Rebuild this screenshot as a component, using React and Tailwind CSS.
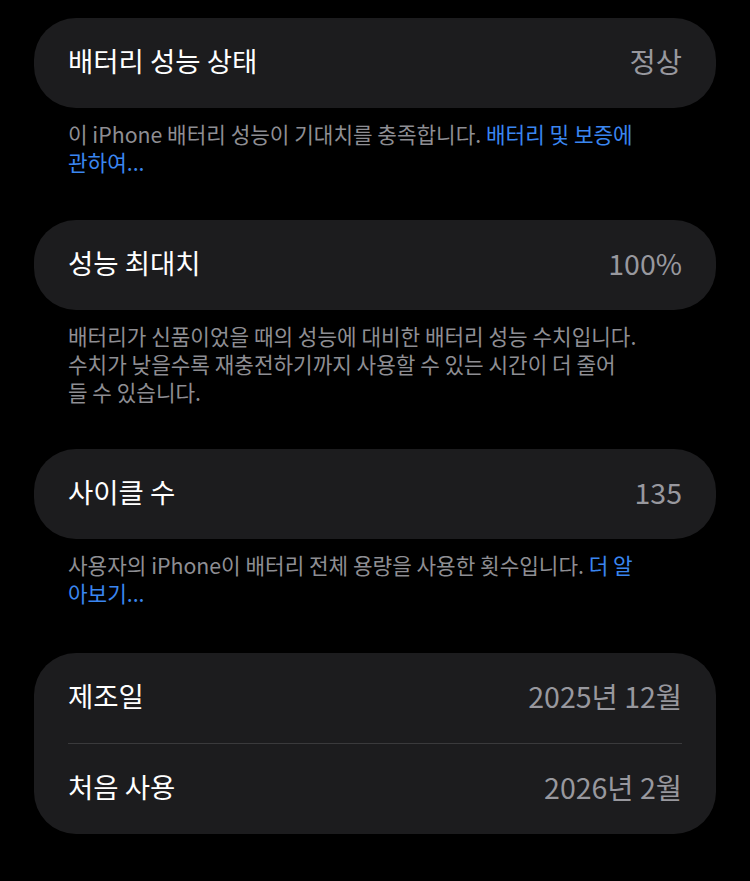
const FONT = { fontFamily: '"Noto Sans CJK KR", "Noto Sans", sans-serif' }

function Row({ label, value }) {
  return (
    <div className="flex h-[90px] items-center justify-between pr-[34px] pl-[34px] pb-[4px]">
      <span className="text-[27.5px] text-white">{label}</span>
      <span className="text-[28.5px] text-[#98989e]">{value}</span>
    </div>
  )
}

function Card({ children }) {
  return <div className="rounded-[42px] bg-[#1c1c1e]">{children}</div>
}

function Footer({ lines, className = '' }) {
  return (
    <div className={`whitespace-nowrap px-[34px] pt-[12px] text-[21.3px] leading-[28px] text-[#8e8e93] ${className}`}>
      {lines.map((l, i) => <div key={i}>{l}</div>)}
    </div>
  )
}

const Link = ({ children }) => <span className="text-[#3a86f0]">{children}</span>

export default function App() {
  return (
    <div style={FONT} className="min-h-[881px] bg-black px-[34px] pt-[18px]">
      <Card>
        <Row label="배터리 성능 상태" value="정상" />
      </Card>
      <Footer
        className="mb-[44px]"
        lines={[
          <>이 iPhone 배터리 성능이 기대치를 충족합니다. <Link>배터리 및 보증에</Link></>,
          <Link>관하여...</Link>,
        ]}
      />

      <Card>
        <Row label="성능 최대치" value="100%" />
      </Card>
      <Footer
        className="mb-[43px]"
        lines={[
          '배터리가 신품이었을 때의 성능에 대비한 배터리 성능 수치입니다.',
          '수치가 낮을수록 재충전하기까지 사용할 수 있는 시간이 더 줄어',
          '들 수 있습니다.',
        ]}
      />

      <Card>
        <Row label="사이클 수" value="135" />
      </Card>
      <Footer
        className="mb-[46px]"
        lines={[
          <>사용자의 iPhone이 배터리 전체 용량을 사용한 횟수입니다. <Link>더 알</Link></>,
          <Link>아보기...</Link>,
        ]}
      />

      <Card>
        <Row label="제조일" value="2025년 12월" />
        <div className="mx-[34px] h-px bg-[#3a3a3c]" />
        <Row label="처음 사용" value="2026년 2월" />
      </Card>
    </div>
  )
}
